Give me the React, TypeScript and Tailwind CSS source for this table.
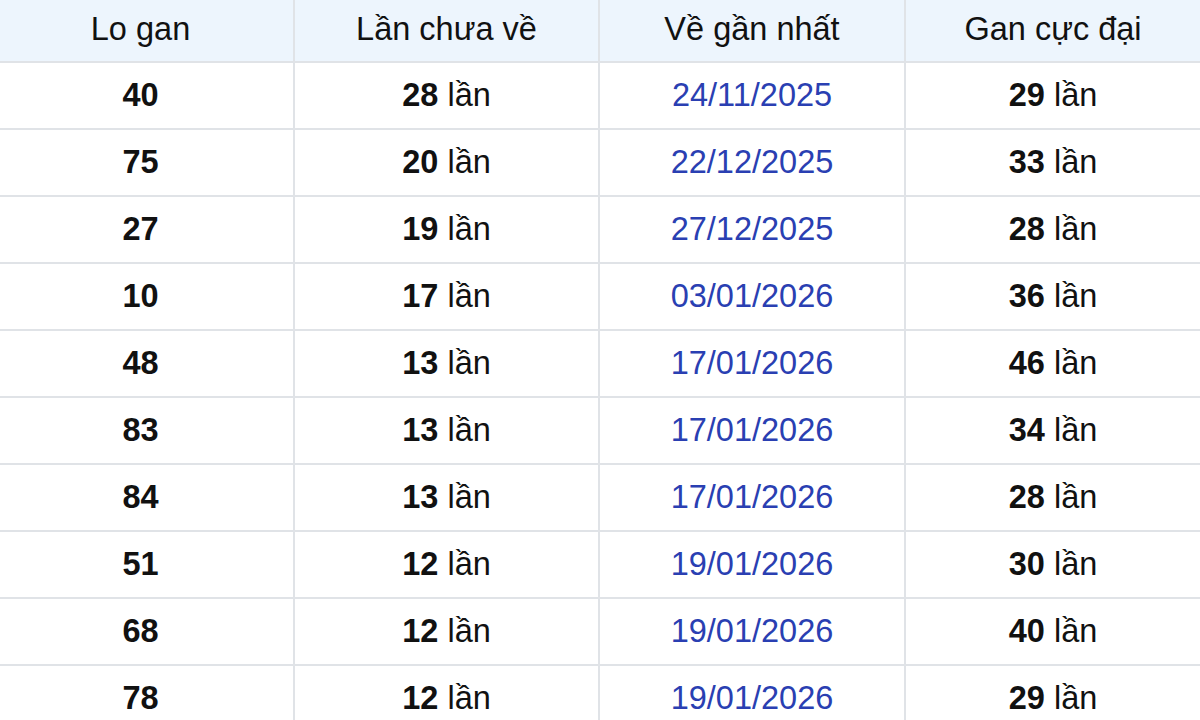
const rows: [string, string, string, string][] = [
  ["40", "28", "24/11/2025", "29"],
  ["75", "20", "22/12/2025", "33"],
  ["27", "19", "27/12/2025", "28"],
  ["10", "17", "03/01/2026", "36"],
  ["48", "13", "17/01/2026", "46"],
  ["83", "13", "17/01/2026", "34"],
  ["84", "13", "17/01/2026", "28"],
  ["51", "12", "19/01/2026", "30"],
  ["68", "12", "19/01/2026", "40"],
  ["78", "12", "19/01/2026", "29"],
];

const headers = ["Lo gan", "Lần chưa về", "Về gần nhất", "Gan cực đại"];

const cell = "flex items-center justify-center border-[#e0e3e7]";

export default function App() {
  return (
    <div
      className="h-[720px] w-[1200px] overflow-hidden bg-white text-[32.5px] text-[#111]"
      style={{ fontFamily: '"Liberation Sans", Arial, sans-serif' }}
    >
      <div className="grid grid-cols-[295px_305px_306px_1fr]">
        {headers.map((h, i) => (
          <div
            key={h}
            className={`${cell} h-[63px] border-b-2 bg-[#edf5fd] pb-[2px] ${
              i < 3 ? "border-r-2" : ""
            } ${i === 0 ? "pr-[12px]" : ""}`}
          >
            {h}
          </div>
        ))}
        {rows.map(([lo, chua, date, max], r) => (
          <div key={r} className="contents">
            <div className={`${cell} h-[67px] border-b-2 border-r-2 pr-[12px] font-bold`}>
              {lo}
            </div>
            <div className={`${cell} h-[67px] border-b-2 border-r-2`}>
              <span className="font-bold">{chua}</span>&nbsp;lần
            </div>
            <div className={`${cell} h-[67px] border-b-2 border-r-2 text-[#2a3fb2]`}>
              {date}
            </div>
            <div className={`${cell} h-[67px] border-b-2`}>
              <span className="font-bold">{max}</span>&nbsp;lần
            </div>
          </div>
        ))}
      </div>
    </div>
  );
}
